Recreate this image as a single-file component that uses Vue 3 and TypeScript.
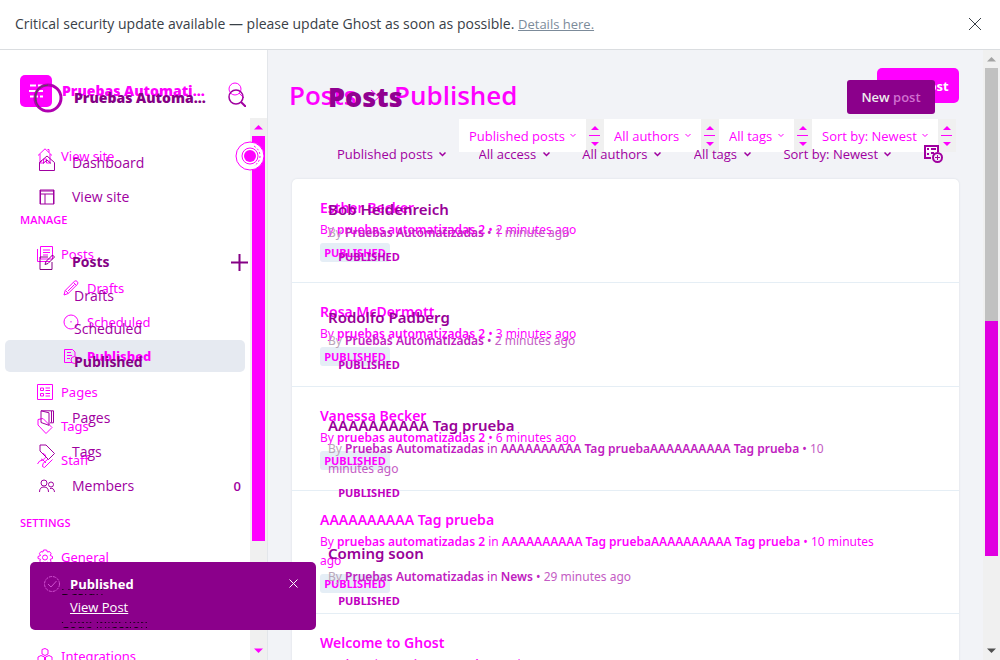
<script setup lang="ts">
interface NavItem {
  label: string
  icon?: string
  sub?: boolean
  active?: boolean
  bold?: boolean
  covered?: boolean
  count?: string
  add?: boolean
}
interface Post {
  title: string
  author: string
  tags?: string
  ago: string
}

const icons: Record<string, string> = {
  home: 'M1 7.5 8 .8l7 6.7M3 6v9h3.500v-4h3v4H13V6M12 4.500V1.500h-1.500',
  posts: 'M3.500 .5h12v12.500h-12zM.5 3v12.500h12.500M6 4h7M6 6.500h7M6 9h5',
  drafts: 'm1 15 1.200-4.500L11.500 1.200q1.500-1 2.700.3 1.200 1.200.3 2.700L5.200 13.500zM10.500 2.500l3 3M2.500 10.500l3 3M5 11l6.500-6.500',
  clock: 'M8 1a7 7 0 1 1 0 14A7 7 0 0 1 8 1M8 7v1.500',
  published: 'M9 14.500H1.500v-13h8L12 4v4M4 4.500h4M4 7.500h5M4 10.500h3M11.500 8.500a3.500 3.500 0 1 1 0 7 3.500 3.500 0 0 1 0-7',
  pages: 'M.5 .5h15v15H.5zM3.500 4h3v2.500h-3zM3.500 9.500h3V12h-3zM8.500 4h4.500M8.500 6.500h4.500M8.500 9.500h4.500M8.500 12h4.500',
  tag: 'M1 1.500 6 .5l9 9-6 6-8-8.500zM4 4h.5',
  staff: 'M6 1.500a3 3 0 1 1-2 5.500M.5 12Q2 8 6 8l3 3M15.500 7.500l-8 8-2-1 .5-3 5-4.500',
  gear: 'm6.500 1-.6 2-2-.4-1.500 2L3.500 6.500l-2.500 1v2l2.500.8-.8 2 1.800 1.700 2-.9 1 2.400h2l.9-2.400 2.100.9 1.500-1.700-.8-2 2.300-.8v-2l-2.300-1 .9-1.900-1.500-2-2.200.4-.8-2zM8 6a2.500 2.500 0 1 1 0 5 2.500 2.500 0 0 1 0-5',
  blocks: 'M5 1.500 8 .5l3 1.500v4L8 7.500 5 6zM1 9l3-1.500L7.500 9v4L4 15l-3-2zM8.500 9 12 7.500 15 9v4l-3 2-3.500-2z',
  house: 'M.5 7.500V15.500h15v-8L8 1zM.5 7.500 3 5.500M4 8.500 8 5l4 3.500',
  layout: 'M1 1h14v14H1zM1 2h14M1 5h14M6 5v10M1.500 1v14M14.500 1v14',
  compose: 'M9 3H1v12.500h12V8M6 10.500l1-3L13.500 1l2 2L9 9.500z',
  book: 'M2 .8h12.500v12H11M2 .8l8 2v12.500L2 12.500zM12.500 1v11.500',
  label: 'M1 1h6l8.500 8.500-6 6L1 7z',
  members: 'M5 2a3 3 0 1 1 0 6 3 3 0 0 1 0-6M.5 14q0-5 4.500-5t4.500 5M12 4a2.500 2.500 0 1 1 0 5 2.500 2.500 0 0 1 0-5M11 10.500q4-1 4.500 3.500'
}

const oldGroups: { heading?: string; items: NavItem[] }[] = [
  { items: [{ label: 'View site', icon: 'home' }] },
  {
    heading: 'MANAGE',
    items: [
      { label: 'Posts', icon: 'posts' },
      { label: 'Drafts', icon: 'drafts', sub: true },
      { label: 'Scheduled', icon: 'clock', sub: true },
      { label: 'Published', icon: 'published', sub: true, active: true },
      { label: 'Pages', icon: 'pages' },
      { label: 'Tags', icon: 'tag' },
      { label: 'Staff', icon: 'staff' }
    ]
  },
  {
    heading: 'SETTINGS',
    items: [
      { label: 'General', icon: 'gear' },
      { label: 'Design', covered: true },
      { label: 'Code injection', covered: true },
      { label: 'Integrations', icon: 'blocks' }
    ]
  }
]

const newGroups: NavItem[][] = [
  [
    { label: 'Dashboard', icon: 'house' },
    { label: 'View site', icon: 'layout' }
  ],
  [
    { label: 'Posts', icon: 'compose', bold: true, add: true },
    { label: 'Drafts', sub: true },
    { label: 'Scheduled', sub: true },
    { label: 'Published', sub: true, bold: true }
  ],
  [
    { label: 'Pages', icon: 'book' },
    { label: 'Tags', icon: 'label' },
    { label: 'Members', icon: 'members', count: '0' }
  ]
]

const oldFilters = ['Published posts', 'All authors', 'All tags', 'Sort by: Newest']
const newFilters = ['Published posts', 'All access', 'All authors', 'All tags', 'Sort by: Newest']
const longTag = 'AAAAAAAAAA Tag pruebaAAAAAAAAAA Tag prueba'

const oldPosts: Post[] = [
  { title: 'Esther Becker', author: 'pruebas automatizadas 2', ago: '2 minutes ago' },
  { title: 'Rosa McDermott', author: 'pruebas automatizadas 2', ago: '3 minutes ago' },
  { title: 'Vanessa Becker', author: 'pruebas automatizadas 2', ago: '6 minutes ago' },
  { title: 'AAAAAAAAAA Tag prueba', author: 'pruebas automatizadas 2', tags: longTag, ago: '10 minutes ago' },
  { title: 'Welcome to Ghost', author: 'Ghost', tags: 'Getting Started', ago: '12 minutes ago' }
]
const newPosts: Post[] = [
  { title: 'Bob Heidenreich', author: 'Pruebas Automatizadas', ago: '1 minute ago' },
  { title: 'Rodolfo Padberg', author: 'Pruebas Automatizadas', ago: '2 minutes ago' },
  { title: 'AAAAAAAAAA Tag prueba', author: 'Pruebas Automatizadas', tags: longTag, ago: '10 minutes ago' },
  { title: 'Coming soon', author: 'Pruebas Automatizadas', tags: 'News', ago: '29 minutes ago' }
]
</script>

<template>
  <div class="app">
    <header class="alert">
      <p>Critical security update available — please update Ghost as soon as possible. <a href="#">Details here.</a></p>
      <button type="button" class="plain" aria-label="Dismiss alert">
        <svg width="14" height="14" viewBox="0 0 14 14"><path d="M1 1l12 12M13 1 1 13" /></svg>
      </button>
    </header>

    <div class="stage">
      <div class="layer before">
        <aside class="sidebar">
          <div class="brand">
            <svg class="logo" width="32" height="32" viewBox="0 0 32 32">
              <rect width="32" height="32" rx="5" fill="#f0f" stroke="none" />
              <path d="M10 10.500h6M18 10.500h5M9 16h14M10 21.500h8M20 21.500h3" stroke="#fff" stroke-width="2" />
            </svg>
            <strong>Pruebas Automati...</strong>
            <button type="button" class="plain" aria-label="Search">
              <svg width="18" height="18" viewBox="0 0 18 18"><circle cx="8" cy="7" r="6" /><path d="m12 11 5 5" /></svg>
            </button>
          </div>
          <div class="scroller">
            <nav>
              <div v-for="(g, gi) in oldGroups" :key="gi" class="group" :class="{ tight: gi === 2 }">
                <h2 v-if="g.heading">{{ g.heading }}</h2>
                <a
                  v-for="i in g.items"
                  :key="i.label"
                  href="#"
                  class="item"
                  :class="{ sub: i.sub, active: i.active, covered: i.covered }"
                >
                  <svg width="16" height="16" viewBox="0 0 16 16"><path v-if="i.icon" :d="icons[i.icon]" /></svg>
                  <span>{{ i.label }}</span>
                </a>
              </div>
            </nav>
            <div class="bar">
              <svg width="9" height="6" viewBox="0 0 9 6"><path class="solid" d="M0 5.500 4.500 1 9 5.500z" /></svg>
              <div class="track"><div class="thumb"></div></div>
              <svg width="9" height="6" viewBox="0 0 9 6"><path class="solid" d="M0 .5 4.500 5 9 .5z" /></svg>
            </div>
          </div>
          <svg class="pulse" width="30" height="30" viewBox="0 0 30 30">
            <circle cx="15" cy="15" r="14" fill="#fff" />
            <path d="M19 5q6 4 6 10t-6 10" stroke-dasharray="2 2" />
            <circle cx="15" cy="15" r="8" />
            <circle cx="15" cy="15" r="6" class="solid" />
          </svg>
        </aside>

        <main class="content">
          <div class="column">
            <div class="top">
              <h1>Posts
                <svg width="12" height="16" viewBox="0 0 12 16"><path d="m2 1 8 7-8 7" /></svg>
                Published</h1>
              <button type="button" class="create">New post</button>
            </div>
            <div class="filters">
              <template v-for="f in oldFilters" :key="f">
                <label class="pick">
                  <select :aria-label="f"><option>{{ f }}</option></select>
                  <svg width="6" height="5" viewBox="0 0 6 5"><path d="m.5 1 2.500 2.500L5.500 1" /></svg>
                </label>
                <svg class="steps" width="18" height="33" viewBox="0 0 18 33">
                  <path class="solid" d="M5 11l4-4 4 4zM5 23l4 4 4-4z" /><path d="M3 16.500h11" />
                </svg>
              </template>
            </div>
            <ol class="list">
              <li v-for="p in oldPosts" :key="p.title">
                <h3>{{ p.title }}</h3>
                <p>By <b>{{ p.author }}</b><template v-if="p.tags"> in <b>{{ p.tags }}</b></template> • {{ p.ago }}</p>
                <span class="badge">PUBLISHED</span>
              </li>
            </ol>
          </div>
          <div class="bar page">
            <svg width="9" height="6" viewBox="0 0 9 6"><path d="M0 5.500 4.500 1 9 5.500z" fill="#a3a3a3" stroke="none" /></svg>
            <div class="track"><div class="thumb grey"></div><div class="thumb changed"></div></div>
            <svg width="9" height="6" viewBox="0 0 9 6"><path d="M0 .5 4.500 5 9 .5z" fill="#505050" stroke="none" /></svg>
          </div>
        </main>
      </div>

      <div class="layer after">
        <aside class="sidebar">
          <div class="brand">
            <svg class="logo" width="32" height="32" viewBox="0 0 32 32">
              <circle cx="16" cy="16" r="13" stroke="#b000b0" stroke-width="3" />
              <path d="M4 19Q1 4 16 3M7 25Q1 18 5 9" stroke="#505050" stroke-width="1" />
            </svg>
            <strong>Pruebas Automa...</strong>
            <button type="button" class="plain" aria-label="Search">
              <svg width="18" height="18" viewBox="0 0 18 18"><circle cx="8" cy="8" r="7" stroke-width="1.500" /><path d="m13 13 5 5" stroke-width="2" /></svg>
            </button>
          </div>
          <nav>
            <div v-for="(g, gi) in newGroups" :key="gi" class="group">
              <a v-for="i in g" :key="i.label" href="#" class="item" :class="{ sub: i.sub, bold: i.bold }">
                <svg v-if="i.icon" width="16" height="16" viewBox="0 0 16 16"><path :d="icons[i.icon]" /></svg>
                <span>{{ i.label }}</span>
                <svg v-if="i.add" class="end" width="17" height="17" viewBox="0 0 17 17"><path d="M8.500 0v17M0 8.500h17" stroke-width="2" /></svg>
                <small v-if="i.count" class="end">{{ i.count }}</small>
              </a>
            </div>
          </nav>
        </aside>

        <main class="content">
          <div class="column">
            <div class="top">
              <h1>Posts</h1>
              <button type="button" class="create">New <span>post</span></button>
            </div>
            <div class="filters">
              <label v-for="f in newFilters" :key="f" class="pick">
                <select :aria-label="f"><option>{{ f }}</option></select>
                <svg width="7" height="5" viewBox="0 0 7 5"><path d="m.5 .5 3 3 3-3" stroke-width="1.500" /></svg>
              </label>
              <button type="button" class="plain" aria-label="Save view">
                <svg width="19" height="18" viewBox="0 0 19 18">
                  <path d="M7 13H1V1h13v6M3 4h2M7 4h5M3 9h2M7 8h3" stroke-width="2" />
                  <circle cx="13.500" cy="12.500" r="4.500" stroke-width="2" /><path d="M13.500 10v5M11 12.500h5" />
                </svg>
              </button>
            </div>
            <ol class="list">
              <li v-for="p in newPosts" :key="p.title">
                <h3>{{ p.title }}</h3>
                <p><i>By</i> <b>{{ p.author }}</b><template v-if="p.tags"> in <b>{{ p.tags }}</b></template> • <span>{{ p.ago }}</span></p>
                <span class="badge">PUBLISHED</span>
              </li>
            </ol>
          </div>
        </main>
      </div>
    </div>

    <div class="toast" role="status">
      <svg width="16" height="16" viewBox="0 0 16 16"><circle cx="8" cy="8" r="7.500" stroke-dasharray="3 1" /><path d="m4 8 3 3 5.500-6" /></svg>
      <div>
        <strong>Published</strong>
        <a href="#">View Post</a>
      </div>
      <button type="button" class="plain" aria-label="Close notification">
        <svg width="9" height="9" viewBox="0 0 9 9"><path d="m.5 .5 8 8M8.500 .5l-8 8" /></svg>
      </button>
    </div>
  </div>
</template>

<style>
body {
  margin: 0;
}
</style>

<style scoped>
.app {
  display: grid;
  grid-template-rows: 50px 1fr;
  height: 100vh;
  overflow: hidden;
  font: 14px/20px "Open Sans", "Noto Sans", sans-serif;
  background: #fff;
  position: relative;
}
.app * {
  box-sizing: border-box;
}
svg {
  fill: none;
  stroke: currentColor;
  flex: none;
}
.solid {
  fill: currentColor;
  stroke: none;
}
h1, h2, h3, p, ol {
  margin: 0;
  padding: 0;
}
ol {
  list-style: none;
}
a {
  color: inherit;
  text-decoration: none;
}
.plain {
  display: flex;
  padding: 0;
  border: 0;
  background: none;
  color: inherit;
}
.alert {
  display: flex;
  align-items: center;
  justify-content: space-between;
  padding: 0 18px 1px 15px;
  border-bottom: 1px solid #dadde0;
  color: #394047;
  font-size: 14px;
}
.alert a {
  color: #7c8b9a;
  font-size: 13px;
  text-decoration: underline;
}
.stage {
  display: grid;
  min-height: 0;
  overflow: hidden;
}
.layer {
  grid-area: 1 / 1;
  display: grid;
  grid-template-columns: 268px 1fr;
  min-height: 0;
}
.before {
  color: #f0f;
}
.after {
  color: #a000a0;
}
.sidebar {
  position: relative;
  display: flex;
  flex-direction: column;
  min-height: 0;
}
.before .sidebar {
  border-right: 1px solid #e3e6ea;
}
.brand {
  display: flex;
  align-items: center;
  padding: 25px 22px 11px 20px;
  font-size: 14px;
}
.brand strong {
  margin-left: 10px;
  font-weight: 800;
  white-space: nowrap;
}
.brand .plain {
  margin-left: auto;
}
.after .brand {
  padding: 32px 22px 16px 32px;
}
.after .brand strong {
  color: #850085;
}
.scroller {
  display: flex;
  flex: 1;
  min-height: 0;
}
.scroller nav {
  flex: 1;
  overflow: hidden;
  padding: 21px 5px 0;
}
.item {
  display: flex;
  align-items: center;
  gap: 8px;
  height: 34px;
  padding-left: 32px;
  font-size: 13px;
}
.before .item {
  font-family: "Noto Sans", sans-serif;
}
.item.sub {
  padding-left: 58px;
}
.before .active {
  height: 32px;
  margin: 1px 0 3px;
  border-radius: 5px;
  background: #e6eaf1;
  font-weight: 800;
}
.before .tight h2 {
  margin-top: 29px;
}
.before .tight .item {
  height: 33px;
}
.covered span {
  position: relative;
  z-index: 2;
  color: transparent;
  background: repeating-linear-gradient(transparent 0 4px, #180018 4px 5px);
  background-clip: text;
}
h2 {
  height: 34px;
  margin-top: 30px;
  padding-left: 15px;
  font-size: 11px;
  line-height: 34px;
  font-weight: 600;
}
.bar {
  display: flex;
  flex-direction: column;
  align-items: center;
  justify-content: space-between;
  width: 17px;
  padding: 6px 0;
  background: #f0f0f0;
}
.track {
  flex: 1;
  width: 13px;
  margin: 6px 0;
}
.thumb {
  height: 80%;
  background: #f0f;
}
.pulse {
  position: absolute;
  right: 2px;
  top: 91px;
}
.after nav {
  padding: 16px 25px 0 7px;
}
.after .item {
  gap: 17px;
  font-size: 14px;
}
.after .sub {
  height: 33px;
  padding-left: 67px;
}
.after .group:nth-child(2) {
  margin-top: 31px;
}
.after .group:nth-child(3) {
  margin-top: 23px;
}
.bold {
  font-weight: 700;
  color: #850085;
}
.end {
  margin-left: auto;
  margin-right: -5px;
}
small.end {
  margin-right: 2px;
  font-size: 13px;
  font-weight: 600;
}
.content {
  display: grid;
  grid-template-columns: 1fr 17px;
  min-width: 0;
  min-height: 0;
}
.before .content {
  background: #f2f3f7;
}
.column {
  padding: 18px 24px 0;
  min-width: 0;
  min-height: 0;
  overflow: hidden;
}
.after .column {
  padding: 29px 48px 0 60px;
}
.top {
  display: flex;
  justify-content: space-between;
  align-items: center;
  height: 35px;
}
.top h1 {
  margin-left: -3px;
  margin-top: 18px;
  font-size: 26px;
  line-height: 36px;
  font-weight: 600;
}
.top h1 svg {
  margin: 0 6px;
}
.after .top h1 {
  margin: 0;
  font-size: 27px;
  font-weight: 800;
  color: #900090;
}
.create {
  width: 82px;
  height: 35px;
  padding: 0;
  border: 0;
  border-radius: 5px;
  background: #f0f;
  color: #fff;
  font: 700 13px "Open Sans", sans-serif;
}
.after .create {
  width: 88px;
  height: 34px;
  border-radius: 3px;
  background: #8b008b;
  color: #eee;
  font-weight: 600;
}
.after .create span {
  color: #d070d0;
}
.filters {
  display: flex;
  justify-content: flex-end;
  margin: 16px 3px 27px 0;
}
.pick {
  display: flex;
  align-items: center;
  justify-content: space-between;
  flex: none;
  height: 33px;
  padding: 0 10px;
  gap: 5px;
  background: #fff;
}
.pick select {
  appearance: none;
  padding: 0;
  border: 0;
  background: none;
  color: inherit;
  font: 500 13px/20px "Open Sans", sans-serif;
}
.steps {
  background: #f0f0f0;
}
.after .filters {
  align-items: center;
  justify-content: space-between;
  height: 20px;
  margin: 30px -8px 16px 9px;
}
.after .pick {
  gap: 6px;
  padding: 0;
  background: none;
}
.before .list {
  border-radius: 5px 5px 0 0;
  background: #fff;
  box-shadow: 0 0 2px #d5d9df;
}
.list li {
  padding: 18px 70px 20px 28px;
  border-bottom: 1px solid #e5eef5;
  font-family: "Noto Sans", sans-serif;
}
.list h3 {
  font-size: 14px;
  line-height: 22px;
  font-weight: 600;
}
.list p {
  margin: 1px 0 4px;
  font-size: 12px;
  line-height: 19px;
}
.list b {
  font-weight: 600;
}
.badge {
  display: block;
  width: 70px;
  border-radius: 3px;
  background: #e5eef6;
  font-size: 11px;
  line-height: 19px;
  font-weight: 700;
  text-align: center;
}
.after .list li {
  padding: 18px 85px 20px 0;
  border: 0;
}
.after .list h3 {
  font-size: 15px;
  color: #980098;
}
.after .list p {
  margin: 3px 0;
  line-height: 20px;
  color: #c020c0;
}
.after .list i {
  font-style: normal;
  color: #b9a5b9;
}
.after .list p span {
  color: #c45cc4;
}
.after .badge {
  width: 82px;
  line-height: 22px;
  background: none;
  color: #c000c0;
}
.page .grey {
  height: 44%;
  background: #c1c1c1;
}
.page .changed {
  height: 41%;
  background: #e000e0;
}
.toast {
  position: absolute;
  z-index: 1;
  left: 30px;
  bottom: 30px;
  display: flex;
  align-items: flex-start;
  gap: 10px;
  width: 286px;
  padding: 11px 18px 12px 14px;
  border-radius: 5px;
  background: #8b008b;
  color: #fff;
  font-size: 13px;
}
.toast > svg {
  margin-top: 3px;
  color: #d050d0;
}
.toast div {
  display: grid;
  flex: 1;
  gap: 1px;
  line-height: 22px;
}
.toast a {
  justify-self: start;
  text-decoration: underline;
}
.toast .plain {
  margin-top: 6px;
}
</style>
